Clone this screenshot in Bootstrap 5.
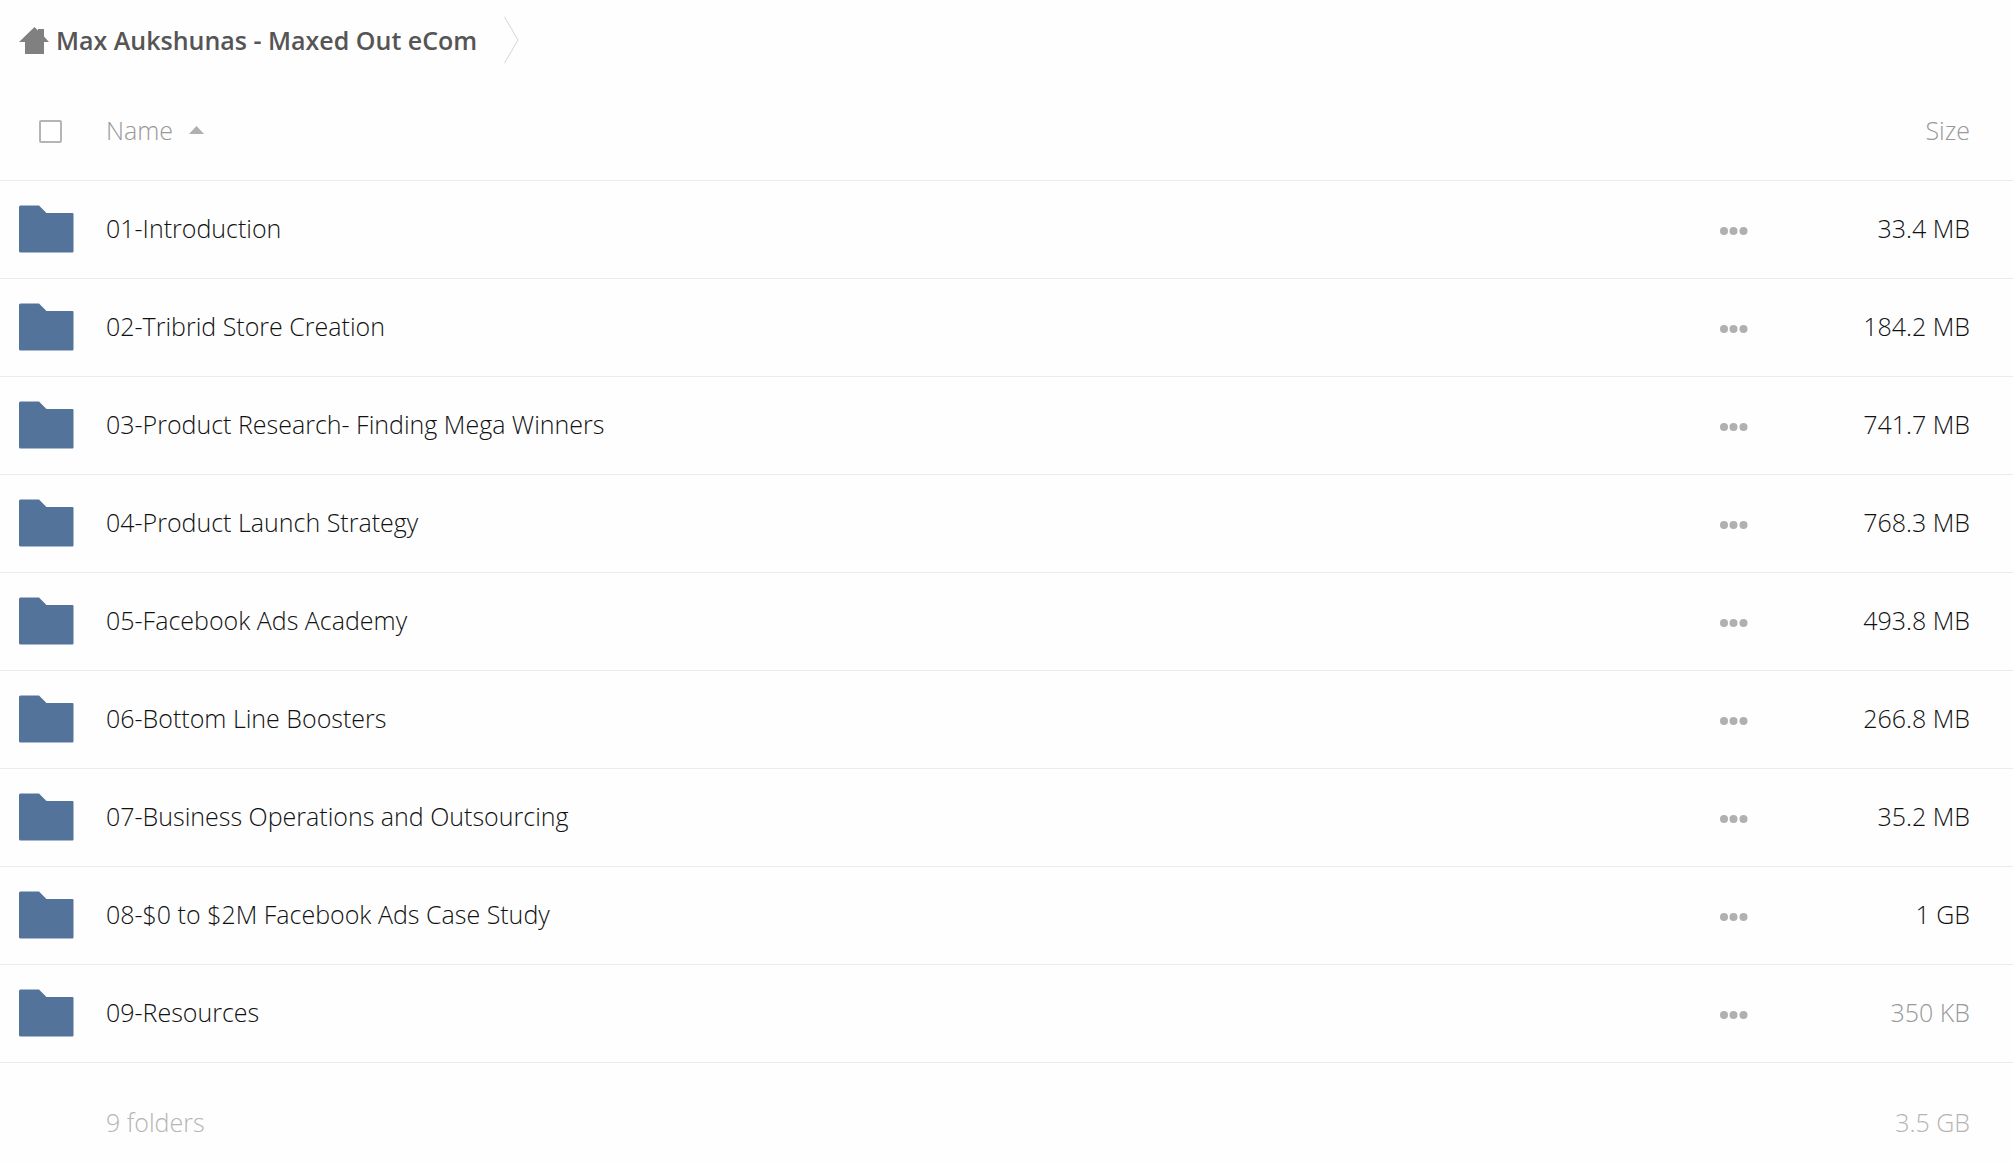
<!DOCTYPE html>
<html lang="en">
<head>
<meta charset="utf-8">
<meta name="viewport" content="width=device-width, initial-scale=1">
<title>Max Aukshunas - Maxed Out eCom</title>
<link href="https://cdn.jsdelivr.net/npm/bootstrap@5.3.0/dist/css/bootstrap.min.css" rel="stylesheet">
<style>
  body { font-family: "Open Sans", sans-serif; font-size: 25px; font-weight: 300; line-height: 34px; color: #111; background: #fefefe; }
  .path-bar { height: 80px; padding-left: 19px; }
  .path-link { color: #555; font-weight: 600; gap: 7px; }
  .path-sep { margin-left: 27px; }
  .file-table { --bs-table-bg: transparent; --bs-table-color: inherit; border-color: #ebebeb; }
  .file-table > :not(caption) > * > * { padding: 0; height: 98px; border-bottom: 1px solid #ebebeb; }
  .file-table > thead > tr > th { height: 100px; font-weight: 300; vertical-align: middle; }
  .file-table > tfoot > tr > td { height: 119px; border-bottom: 0; color: #b5b5b5; }
  .file-table > tbody > tr > .file-name { padding-bottom: 3px; }
  .file-table > tbody > tr > .file-size { padding-bottom: 2px; }
  .file-table > :not(caption) > * > .col-pick { width: 106px; padding-left: 19px; }
  .file-table > :not(caption) > * > .file-size { width: 225px; padding-right: 43px; }
  .col-more { width: 68px; }
  .sort-btn, .soft { color: #999; }
  .sort-btn { gap: 16px; font-weight: 300; }
  .form-check-input.pick-all { width: 23px; height: 23px; margin: 4px 0 0 20px; border: 2px solid #b5b5b5; border-radius: 2px; background-color: #fff; float: none; }
  .more-btn { margin-top: 3px; }
  svg { display: block; }
</style>
</head>
<body>
<nav class="path-bar d-flex align-items-center" aria-label="Path">
  <a href="#" class="path-link d-flex align-items-center text-decoration-none">
    <svg width="30" height="27" viewBox="0 0 30 27" fill="#808080" aria-hidden="true"><path d="M15.500 0L19 3.500V2H25V9.500L30 15H25V27H6V15H0z"/></svg>
    <span>Max Aukshunas - Maxed Out eCom</span>
  </a>
  <svg class="path-sep" width="15" height="46" viewBox="0 0 15 46" fill="none" stroke="#d5d5d5" aria-hidden="true"><path d="M.5 0L14 23L.5 46"/></svg>
</nav>

<svg class="d-none" aria-hidden="true">
  <symbol id="folder" viewBox="0 0 55 48"><path d="M1.500.5H20L27.500 8H53.500q1 0 1 1V46.500q0 1-1 1H1.500Q0 47.500 0 46V2Q0 .5 1.500.5z" fill="#54739b"/></symbol>
  <symbol id="dots" viewBox="0 0 28 8"><g fill="#b0b0b0"><circle cx="4" cy="4" r="4"/><circle cx="13.500" cy="4" r="4"/><circle cx="23.500" cy="4" r="4"/></g></symbol>
</svg>

<table class="table file-table align-middle mb-0">
  <thead>
    <tr>
      <th class="col-pick" scope="col"><input class="form-check-input pick-all d-block" type="checkbox" aria-label="Select all"></th>
      <th scope="col"><button type="button" class="sort-btn d-flex align-items-center border-0 bg-transparent p-0">Name
        <svg width="15" height="8" viewBox="0 0 15 8" fill="#b0b0b0" aria-hidden="true"><path d="M7.500 0L15 8H0z"/></svg></button></th>
      <th class="col-more"></th>
      <th class="file-size soft text-end" scope="col">Size</th>
    </tr>
  </thead>
  <tbody id="files"></tbody>
  <tfoot>
    <tr><td class="col-pick"></td><td>9 folders</td><td></td><td class="file-size text-end">3.5 GB</td></tr>
  </tfoot>
</table>

<script src="https://cdn.jsdelivr.net/npm/bootstrap@5.3.0/dist/js/bootstrap.bundle.min.js"></script>
<script>
  const folders = [
    ["01-Introduction", "33.4 MB"],
    ["02-Tribrid Store Creation", "184.2 MB"],
    ["03-Product Research- Finding Mega Winners", "741.7 MB"],
    ["04-Product Launch Strategy", "768.3 MB"],
    ["05-Facebook Ads Academy", "493.8 MB"],
    ["06-Bottom Line Boosters", "266.8 MB"],
    ["07-Business Operations and Outsourcing", "35.2 MB"],
    ["08-$0 to $2M Facebook Ads Case Study", "1 GB"],
    ["09-Resources", "350 KB"]
  ];
  document.getElementById("files").innerHTML = folders.map(([name, size]) => `
    <tr>
      <td class="col-pick"><svg width="55" height="48" aria-hidden="true"><use href="#folder"/></svg></td>
      <td class="file-name"><a href="#" class="text-reset text-decoration-none">${name}</a></td>
      <td><button type="button" class="more-btn d-block border-0 bg-transparent p-0" aria-label="Actions for ${name}"><svg width="28" height="8"><use href="#dots"/></svg></button></td>
      <td class="file-size text-end ${size.endsWith("KB") ? "soft" : ""}">${size}</td>
    </tr>`).join("");
</script>
</body>
</html>
